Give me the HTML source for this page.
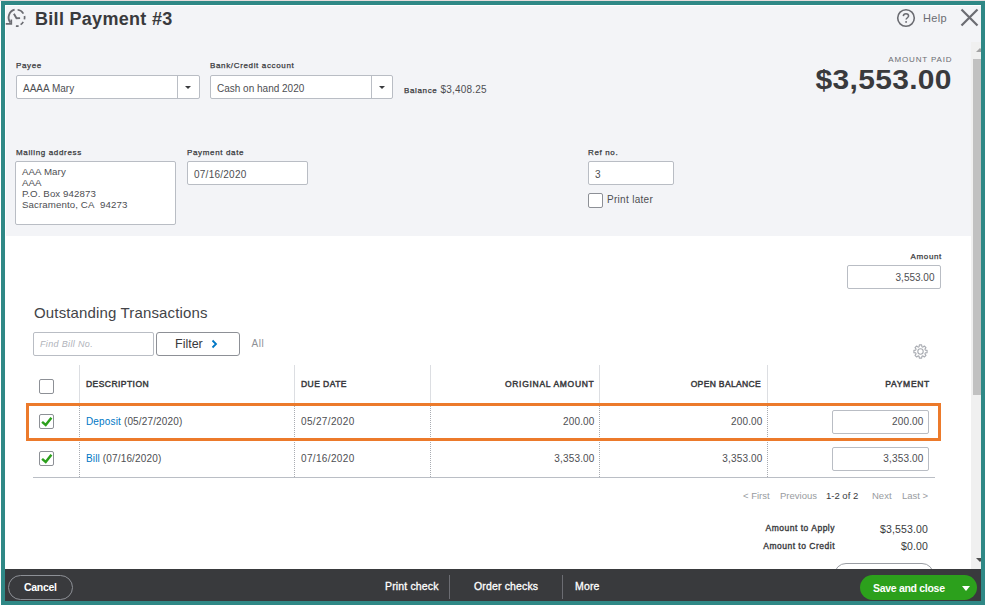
<!DOCTYPE html>
<html><head><meta charset="utf-8">
<style>
*{margin:0;padding:0;box-sizing:border-box}
html,body{width:985px;height:605px;overflow:hidden;background:#fff}
body{font-family:"Liberation Sans",sans-serif;color:#393a3d;position:relative}
.a{position:absolute;white-space:nowrap;line-height:1}
.frame{position:absolute;left:1px;top:1px;width:984px;height:604px;border:4px solid #2f8886;z-index:10}
.topline{position:absolute;left:0;top:0;width:985px;height:1px;background:#e6dcdc}
.inner{position:absolute;left:5px;top:5px;width:976px;height:596px;background:#fff;overflow:hidden}
.hdr{position:absolute;left:6px;top:6px;width:975px;height:230px;background:#f3f4f7}
.box{position:absolute;background:#fff;border:1px solid #b9bdc4;border-radius:2px}
.lbl{font-size:8px;font-weight:normal;-webkit-text-stroke:.25px #393a3d;color:#393a3d;letter-spacing:.65px}
.val{font-size:10px;color:#4d4e52;letter-spacing:0}
.vd{position:absolute;width:1px;background:#babec5}
.arr{position:absolute;width:0;height:0;border-left:3px solid transparent;border-right:3px solid transparent;border-top:3px solid #393a3d}
.cb{position:absolute;width:15px;height:15px;border:1.5px solid #8d9096;border-radius:2px;background:#fff}
.th{font-size:8.5px;font-weight:normal;-webkit-text-stroke:.45px #393a3d;color:#393a3d;letter-spacing:.45px}
.td{font-size:10px;color:#4d4e52;letter-spacing:.15px}
.coldiv{position:absolute;width:0;border-left:1px dotted #a9acb2}
.colsol{position:absolute;width:1px;background:#dcdee2}
.pg{font-size:9.5px;color:#989ba0;letter-spacing:0}
.ft{font-size:10.5px;color:#fff;font-weight:bold}
</style></head><body>
<div class="topline"></div>
<div class="inner"></div>
<div class="hdr"></div>

<!-- header -->
<svg class="a" style="left:0;top:0" width="30" height="30" viewBox="0 0 30 30">
  <g fill="none" stroke="#6b6c72" stroke-width="1.7">
    <path d="M14.6 9.7 A8.1 8.1 0 0 0 10.4 22.6" stroke-width="1.85"/>
    <path d="M6.6 23.8 H11.3 V20.4" stroke-linecap="square"/>
    <path d="M17.6 9.75 A8.1 8.1 0 0 1 23.4 13.6"/>
    <path d="M24.5 16 A8.1 8.1 0 0 1 24.4 19.4"/>
    <path d="M23.2 21.8 A8.1 8.1 0 0 1 20.6 24.6"/>
    <path d="M18.6 25.9 A8.3 8.3 0 0 1 15.9 26.1"/>
    <path d="M13.9 13.8 L16.5 18.3 L20.1 18.1" stroke-width="1.9"/>
  </g>
</svg>
<div class="a" style="left:35px;top:9.6px;font-size:18px;font-weight:bold;color:#393a3d;letter-spacing:.3px">Bill Payment #3</div>

<svg class="a" style="left:896px;top:8px" width="20" height="20" viewBox="0 0 20 20">
  <circle cx="10" cy="10" r="8.3" fill="none" stroke="#6b6c72" stroke-width="1.6"/>
  <path d="M7.3 8.1 C7.4 6.6 8.5 5.8 10 5.8 C11.5 5.8 12.6 6.8 12.6 8.1 C12.6 9.6 10.1 9.9 10.1 11.6" fill="none" stroke="#6b6c72" stroke-width="1.5"/><circle cx="10.1" cy="13.9" r="0.95" fill="#6b6c72"/>
</svg>
<div class="a" style="left:923px;top:13.4px;font-size:11px;color:#6b6c72;letter-spacing:.3px">Help</div>
<svg class="a" style="left:960px;top:8px" width="19" height="19" viewBox="0 0 19 19">
  <path d="M1.5 1.5 L17.5 17.5 M17.5 1.5 L1.5 17.5" stroke="#6b6c72" stroke-width="2.2"/>
</svg>

<div class="a lbl" style="left:16px;top:62.2px">Payee</div>
<div class="box" style="left:16px;top:75px;width:184px;height:24px"></div>
<div class="vd" style="left:177px;top:76px;height:22px"></div>
<div class="arr" style="left:185px;top:86px"></div>
<div class="a val" style="left:23px;top:83.8px">AAAA Mary</div>

<div class="a lbl" style="left:210px;top:62.2px">Bank/Credit account</div>
<div class="box" style="left:210px;top:75px;width:183px;height:24px"></div>
<div class="vd" style="left:371px;top:76px;height:22px"></div>
<div class="arr" style="left:379px;top:86px"></div>
<div class="a val" style="left:217px;top:83.8px">Cash on hand 2020</div>
<div class="a" style="left:404px;top:84.8px;font-size:10px;letter-spacing:.2px;color:#4d4e52"><span style="font-size:8px;letter-spacing:.65px;-webkit-text-stroke:.25px #393a3d;color:#393a3d">Balance</span> $3,408.25</div>

<div class="a" style="right:32.5px;top:56px;font-size:8px;color:#6b6c72;letter-spacing:.85px">AMOUNT PAID</div>
<div class="a" style="right:33.5px;top:67px;font-size:27px;font-weight:bold;color:#393a3d;letter-spacing:.3px;transform:scaleX(1.11);transform-origin:100% 50%">$3,553.00</div>

<div class="a lbl" style="left:16px;top:148.5px">Mailing address</div>
<div class="box" style="left:15px;top:161px;width:161px;height:64px"></div>
<div class="a val" style="left:22px;top:167.4px;line-height:10.9px;font-size:9.7px;letter-spacing:.1px">AAA Mary<br>AAA<br>P.O. Box 942873<br>Sacramento, CA&nbsp; 94273</div>

<div class="a lbl" style="left:187px;top:148.5px">Payment date</div>
<div class="box" style="left:187px;top:161px;width:121px;height:24px"></div>
<div class="a val" style="left:194px;top:169.5px;letter-spacing:.25px">07/16/2020</div>

<div class="a lbl" style="left:588px;top:148.5px">Ref no.</div>
<div class="box" style="left:588px;top:161px;width:86px;height:24px"></div>
<div class="a val" style="left:595px;top:169.5px">3</div>
<div class="cb" style="left:588px;top:193px;border-width:1px;border-color:#8d9096"></div>
<div class="a" style="left:607px;top:194.8px;font-size:10px;letter-spacing:.3px;color:#4d4e52">Print later</div>

<!-- body -->
<div class="a lbl" style="right:43px;top:252.6px">Amount</div>
<div class="box" style="left:847px;top:265px;width:94px;height:24px"></div>
<div class="a val" style="right:50.5px;top:273.3px;letter-spacing:0">3,553.00</div>

<div class="a" style="left:34px;top:304.6px;font-size:15px;color:#434448;letter-spacing:.15px">Outstanding Transactions</div>
<div class="box" style="left:33px;top:332px;width:121px;height:24px"></div>
<div class="a" style="left:40px;top:340px;font-size:9px;font-style:italic;color:#b0b3ba;letter-spacing:.35px">Find Bill No.</div>
<div class="box" style="left:156px;top:332px;width:84px;height:24px;border-color:#8d9096;border-radius:3px"></div>
<div class="a" style="left:175px;top:338px;font-size:12.5px;color:#393a3d">Filter</div>
<svg class="a" style="left:211px;top:339px" width="8" height="10" viewBox="0 0 8 10"><path d="M1.5 1.5 L5 5 L1.5 8.5" fill="none" stroke="#0077c5" stroke-width="1.8"/></svg>
<div class="a" style="left:251.5px;top:339px;font-size:10px;color:#8d9096;letter-spacing:.6px">All</div>

<svg class="a" style="left:912px;top:343px" width="17" height="17" viewBox="0 0 17 17">
  <path d="M7.12 3.69 L7.34 1.90 L9.66 1.90 L9.88 3.69 L10.92 4.13 L12.34 3.01 L13.99 4.66 L12.87 6.08 L13.31 7.12 L15.10 7.34 L15.10 9.66 L13.31 9.88 L12.87 10.92 L13.99 12.34 L12.34 13.99 L10.92 12.87 L9.88 13.31 L9.66 15.10 L7.34 15.10 L7.12 13.31 L6.08 12.87 L4.66 13.99 L3.01 12.34 L4.13 10.92 L3.69 9.88 L1.90 9.66 L1.90 7.34 L3.69 7.12 L4.13 6.08 L3.01 4.66 L4.66 3.01 L6.08 4.13 Z" fill="none" stroke="#a9acb2" stroke-width="1.1" stroke-linejoin="round"/>
  <circle cx="8.5" cy="8.5" r="2.7" fill="none" stroke="#a9acb2" stroke-width="1.1"/>
</svg>

<!-- table -->
<div class="cb" style="left:39px;top:379px"></div>
<div class="colsol" style="left:79px;top:365px;height:38px"></div>
<div class="colsol" style="left:294px;top:365px;height:38px"></div>
<div class="colsol" style="left:430px;top:365px;height:38px"></div>
<div class="colsol" style="left:599px;top:365px;height:38px"></div>
<div class="colsol" style="left:767px;top:365px;height:38px"></div>
<div class="coldiv" style="left:79px;top:403px;height:74px"></div>
<div class="coldiv" style="left:294px;top:403px;height:74px"></div>
<div class="coldiv" style="left:430px;top:403px;height:74px"></div>
<div class="coldiv" style="left:599px;top:403px;height:74px"></div>
<div class="coldiv" style="left:767px;top:403px;height:74px"></div>

<div class="a th" style="left:86px;top:380px">DESCRIPTION</div>
<div class="a th" style="left:301px;top:380px">DUE DATE</div>
<div class="a th" style="right:390.5px;top:380px;letter-spacing:.7px">ORIGINAL AMOUNT</div>
<div class="a th" style="right:224px;top:380px;letter-spacing:.35px">OPEN BALANCE</div>
<div class="a th" style="right:55px;top:380px;letter-spacing:.7px">PAYMENT</div>

<div class="cb" style="left:39px;top:414px"></div>
<svg class="a" style="left:40px;top:415px" width="13" height="13" viewBox="0 0 13 13"><path d="M2.1 6.9 L5.7 10 L11.4 2.8" fill="none" stroke="#2ca01c" stroke-width="2.5"/></svg>
<div class="a td" style="left:86px;top:417px"><span style="color:#0077c5">Deposit</span> (05/27/2020)</div>
<div class="a td" style="left:301px;top:417px;letter-spacing:.35px">05/27/2020</div>
<div class="a td" style="right:390.5px;top:417px">200.00</div>
<div class="a td" style="right:222.5px;top:417px">200.00</div>
<div class="box" style="left:832px;top:410px;width:97px;height:24px"></div>
<div class="a td" style="right:61.5px;top:417px">200.00</div>

<div class="cb" style="left:39px;top:451px"></div>
<svg class="a" style="left:40px;top:452px" width="13" height="13" viewBox="0 0 13 13"><path d="M2.1 6.9 L5.7 10 L11.4 2.8" fill="none" stroke="#2ca01c" stroke-width="2.5"/></svg>
<div class="a td" style="left:86px;top:454.1px"><span style="color:#0077c5">Bill</span> (07/16/2020)</div>
<div class="a td" style="left:301px;top:454.1px;letter-spacing:.35px">07/16/2020</div>
<div class="a td" style="right:390.5px;top:454.1px">3,353.00</div>
<div class="a td" style="right:222.5px;top:454.1px">3,353.00</div>
<div class="box" style="left:832px;top:447px;width:97px;height:24px"></div>
<div class="a td" style="right:61.5px;top:454.1px">3,353.00</div>

<div class="a" style="left:33px;top:477px;width:902px;height:1px;background:#babec5"></div>
<div class="a" style="left:26px;top:403px;width:915px;height:38px;border:3px solid #ec7a2b"></div>

<!-- pagination -->
<div class="a pg" style="left:743px;top:491px">&lt; First</div>
<div class="a pg" style="left:780px;top:491px">Previous</div>
<div class="a pg" style="left:826px;top:491px;color:#393a3d">1-2 of 2</div>
<div class="a pg" style="left:872px;top:491px">Next</div>
<div class="a pg" style="left:902px;top:491px">Last &gt;</div>

<div class="a" style="right:150px;top:523.5px;font-size:8.5px;-webkit-text-stroke:.35px #393a3d;letter-spacing:.5px">Amount to Apply</div>
<div class="a" style="right:57px;top:524.2px;font-size:10.5px;letter-spacing:.15px">$3,553.00</div>
<div class="a" style="right:150px;top:541.5px;font-size:8.5px;-webkit-text-stroke:.35px #393a3d;letter-spacing:.5px">Amount to Credit</div>
<div class="a" style="right:57px;top:541.4px;font-size:10.5px;letter-spacing:.15px">$0.00</div>
<div class="a" style="left:834px;top:563px;width:100px;height:24px;border:1px solid #9a9da3;border-radius:12px"></div>

<!-- scrollbar -->
<div class="a" style="left:971px;top:42px;width:10px;height:527px;background:#f0f0f0"></div>
<div class="a" style="left:973px;top:59px;width:8px;height:336px;background:#c1c1c1"></div>
<div class="a" style="left:976px;top:48px;width:0;height:0;border-left:4px solid transparent;border-right:4px solid transparent;border-bottom:4px solid #a3a3a3"></div>
<div class="a" style="left:976px;top:558px;width:0;height:0;border-left:4px solid transparent;border-right:4px solid transparent;border-top:4px solid #505050"></div>

<!-- footer -->
<div class="a" style="left:5px;top:569px;width:976px;height:32px;background:#393a3d"></div>
<div class="a" style="left:8px;top:575px;width:65px;height:25px;border:1px solid #8d9096;border-radius:13px"></div>
<div class="a ft" style="left:24px;top:582px;letter-spacing:-.3px">Cancel</div>
<div class="a ft" style="left:385px;top:581.3px;font-weight:normal;-webkit-text-stroke:.3px #fff;letter-spacing:.15px">Print check</div>
<div class="a" style="left:449px;top:575px;width:1px;height:24px;background:#6b6c72"></div>
<div class="a ft" style="left:474px;top:581.3px;font-weight:normal;-webkit-text-stroke:.3px #fff;letter-spacing:.15px">Order checks</div>
<div class="a" style="left:562px;top:575px;width:1px;height:24px;background:#6b6c72"></div>
<div class="a ft" style="left:575px;top:581.3px;font-weight:normal;-webkit-text-stroke:.3px #fff;letter-spacing:.15px">More</div>
<div class="a" style="left:860px;top:575px;width:117px;height:25px;background:#2ca01c;border-radius:13px"></div>
<div class="a ft" style="left:873px;top:582.5px;letter-spacing:-.3px">Save and close</div>
<div class="a" style="left:962px;top:586px;width:0;height:0;border-left:4px solid transparent;border-right:4px solid transparent;border-top:5px solid #fff"></div>
<div class="frame"></div>
</body></html>
